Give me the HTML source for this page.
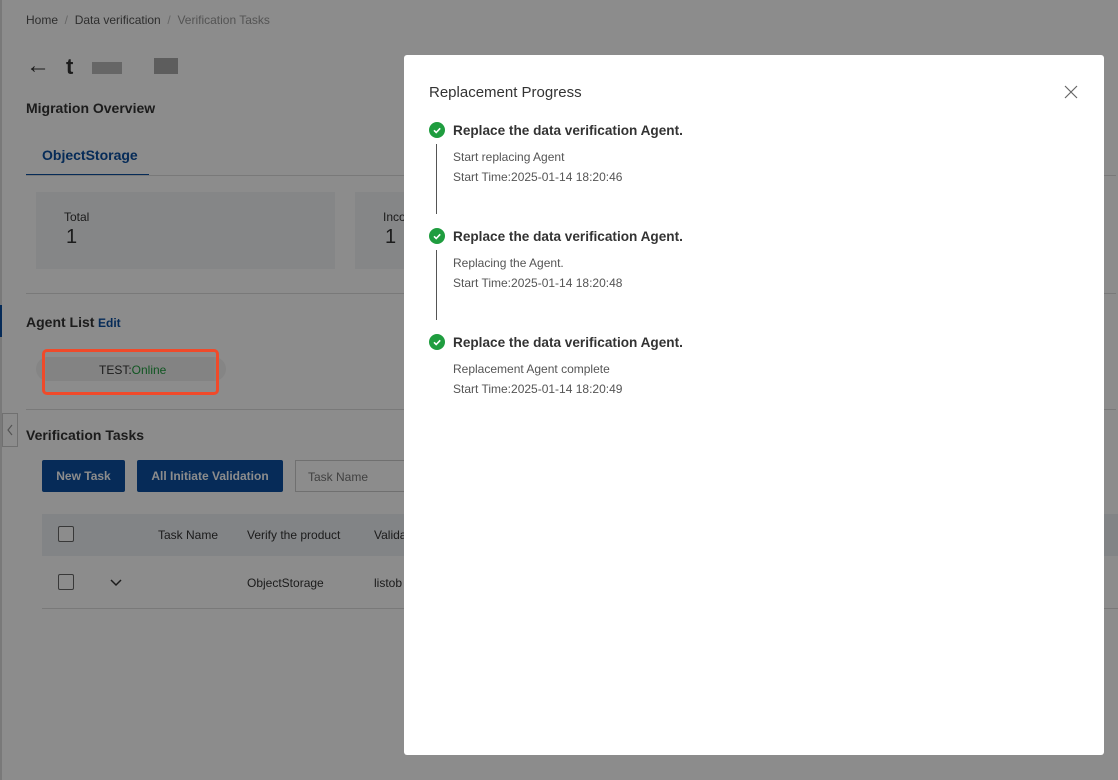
<!DOCTYPE html>
<html><head><meta charset="utf-8"><style>
*{box-sizing:border-box;margin:0;padding:0}
body{width:1118px;height:780px;overflow:hidden;position:relative;font-family:"Liberation Sans",sans-serif;background:#fff;color:#333}
.a{position:absolute}
.ov{position:absolute;left:0;top:0;width:1118px;height:780px;background:rgba(0,0,0,0.45)}
.modal{position:absolute;left:404px;top:55px;width:700px;height:700px;background:#fff;border-radius:3px}
.t{font-size:13.6px;font-weight:bold;color:#333}
.s{font-size:12px;color:#555}
.ck{position:absolute;width:16px;height:16px;border-radius:50%;background:#1f9d3f}
</style></head><body>
<div class="a" style="left:0;top:0;width:2px;height:780px;background:#ddd"></div>
<div class="a" style="left:26px;top:13px;font-size:12px;color:#555">Home <span style="color:#bbb">&nbsp;/&nbsp;</span> Data verification <span style="color:#bbb">&nbsp;/&nbsp;</span> <span style="color:#999">Verification Tasks</span></div>
<div class="a" style="left:26px;top:52px;font-size:24px;color:#333">&larr;</div>
<div class="a" style="left:66px;top:54px;font-size:22px;font-weight:bold;color:#333">t</div>
<div class="a" style="left:92px;top:62px;width:30px;height:12px;background:#bbb"></div>
<div class="a" style="left:154px;top:58px;width:24px;height:16px;background:#aaa"></div>
<div class="a" style="left:26px;top:100px;font-size:14px;font-weight:bold">Migration Overview</div>
<div class="a" style="left:42px;top:147px;font-size:14px;color:#0b4fa0;font-weight:bold">ObjectStorage</div>
<div class="a" style="left:26px;top:174px;width:123px;height:2px;background:#0b4fa0"></div>
<div class="a" style="left:26px;top:175px;width:1090px;height:1px;background:#ddd"></div>
<div class="a" style="left:36px;top:192px;width:299px;height:77px;background:#f3f4f6"></div>
<div class="a" style="left:355px;top:192px;width:299px;height:77px;background:#f3f4f6"></div>
<div class="a" style="left:64px;top:210px;font-size:12px">Total</div>
<div class="a" style="left:66px;top:226px;font-size:20px">1</div>
<div class="a" style="left:383px;top:210px;font-size:12px">Inco</div>
<div class="a" style="left:385px;top:226px;font-size:20px">1</div>
<div class="a" style="left:26px;top:293px;width:1090px;height:1px;background:#ddd"></div>
<div class="a" style="left:0;top:305px;width:2px;height:32px;background:#0b4fa0"></div>
<div class="a" style="left:26px;top:314px;font-size:14px;font-weight:bold">Agent List</div>
<div class="a" style="left:98px;top:316px;font-size:12px;color:#0b4fa0;font-weight:bold">Edit</div>
<div class="a" style="left:36px;top:357px;width:190px;height:24px;border-radius:12px;background:#f3f3f3"></div>
<div class="a" style="left:46px;top:357px;width:168px;height:24px;background:#eee"></div>
<div class="a" style="left:99px;top:363px;font-size:12px">TEST:<span style="color:#1f9d3f">Online</span></div>
<div class="a" style="left:26px;top:409px;width:1090px;height:1px;background:#ddd"></div>
<div class="a" style="left:2px;top:413px;width:16px;height:34px;border:1px solid #ccc;background:#fff"></div>
<svg class="a" style="left:5px;top:423px" width="10" height="14"><path d="M7 2L3 7L7 12" stroke="#999" stroke-width="1.2" fill="none"/></svg>
<div class="a" style="left:26px;top:427px;font-size:14px;font-weight:bold">Verification Tasks</div>
<div class="a" style="left:42px;top:460px;width:83px;height:32px;background:#0b4fa0;border-radius:2px;color:#fff;font-size:12px;font-weight:bold;text-align:center;line-height:32px">New Task</div>
<div class="a" style="left:137px;top:460px;width:146px;height:32px;background:#0b4fa0;border-radius:2px;color:#fff;font-size:12px;font-weight:bold;text-align:center;line-height:32px">All Initiate Validation</div>
<div class="a" style="left:295px;top:460px;width:120px;height:32px;border:1px solid #ccc;background:#fff;font-size:12px;color:#777;padding:9px 12px">Task Name</div>
<div class="a" style="left:42px;top:514px;width:1076px;height:42px;background:#edf0f5"></div>
<div class="a" style="left:58px;top:526px;width:16px;height:16px;border:1px solid #666;background:#fff;border-radius:2px"></div>
<div class="a" style="left:158px;top:528px;font-size:12px">Task Name</div>
<div class="a" style="left:247px;top:528px;font-size:12px">Verify the product</div>
<div class="a" style="left:374px;top:528px;font-size:12px">Valida</div>
<div class="a" style="left:42px;top:608px;width:1076px;height:1px;background:#ddd"></div>
<div class="a" style="left:58px;top:574px;width:16px;height:16px;border:1px solid #666;background:#fff;border-radius:2px"></div>
<svg class="a" style="left:109px;top:578px" width="14" height="10"><path d="M2 2L7 7L12 2" stroke="#333" stroke-width="1.5" fill="none"/></svg>
<div class="a" style="left:247px;top:576px;font-size:12px">ObjectStorage</div>
<div class="a" style="left:374px;top:576px;font-size:12px">listob</div>
<div class="ov"></div>
<div class="modal">
<div class="a" style="left:25px;top:29px;font-size:15px;color:#333">Replacement Progress</div>
<svg class="a" style="left:660px;top:30px" width="14" height="14" viewBox="0 0 14 14"><path d="M1 1L13 13M13 1L1 13" stroke="#666" stroke-width="1.2"/></svg>
<div class="a" style="left:32px;top:89px;width:1px;height:70px;background:#555"></div>
<div class="a" style="left:32px;top:195px;width:1px;height:70px;background:#555"></div>
<div class="ck" style="left:25px;top:67px"></div><div class="ck" style="left:25px;top:173px"></div><div class="ck" style="left:25px;top:279px"></div>
<svg class="a" style="left:25px;top:67px" width="16" height="228"><g fill="none" stroke="#fff" stroke-width="1.6"><path d="M5 8.3l2.2 2.2 4-4.2"/><path d="M5 114.3l2.2 2.2 4-4.2"/><path d="M5 220.3l2.2 2.2 4-4.2"/></g></svg>
<div class="a t" style="left:49px;top:68px">Replace the data verification Agent.</div>
<div class="a s" style="left:49px;top:95px">Start replacing Agent</div>
<div class="a s" style="left:49px;top:115px">Start Time:2025-01-14 18:20:46</div>
<div class="a t" style="left:49px;top:174px">Replace the data verification Agent.</div>
<div class="a s" style="left:49px;top:201px">Replacing the Agent.</div>
<div class="a s" style="left:49px;top:221px">Start Time:2025-01-14 18:20:48</div>
<div class="a t" style="left:49px;top:280px">Replace the data verification Agent.</div>
<div class="a s" style="left:49px;top:307px">Replacement Agent complete</div>
<div class="a s" style="left:49px;top:327px">Start Time:2025-01-14 18:20:49</div>
</div>
<div class="a" style="left:42px;top:349px;width:177px;height:46px;border:3px solid #f04a2a;border-radius:5px"></div>
</body></html>
